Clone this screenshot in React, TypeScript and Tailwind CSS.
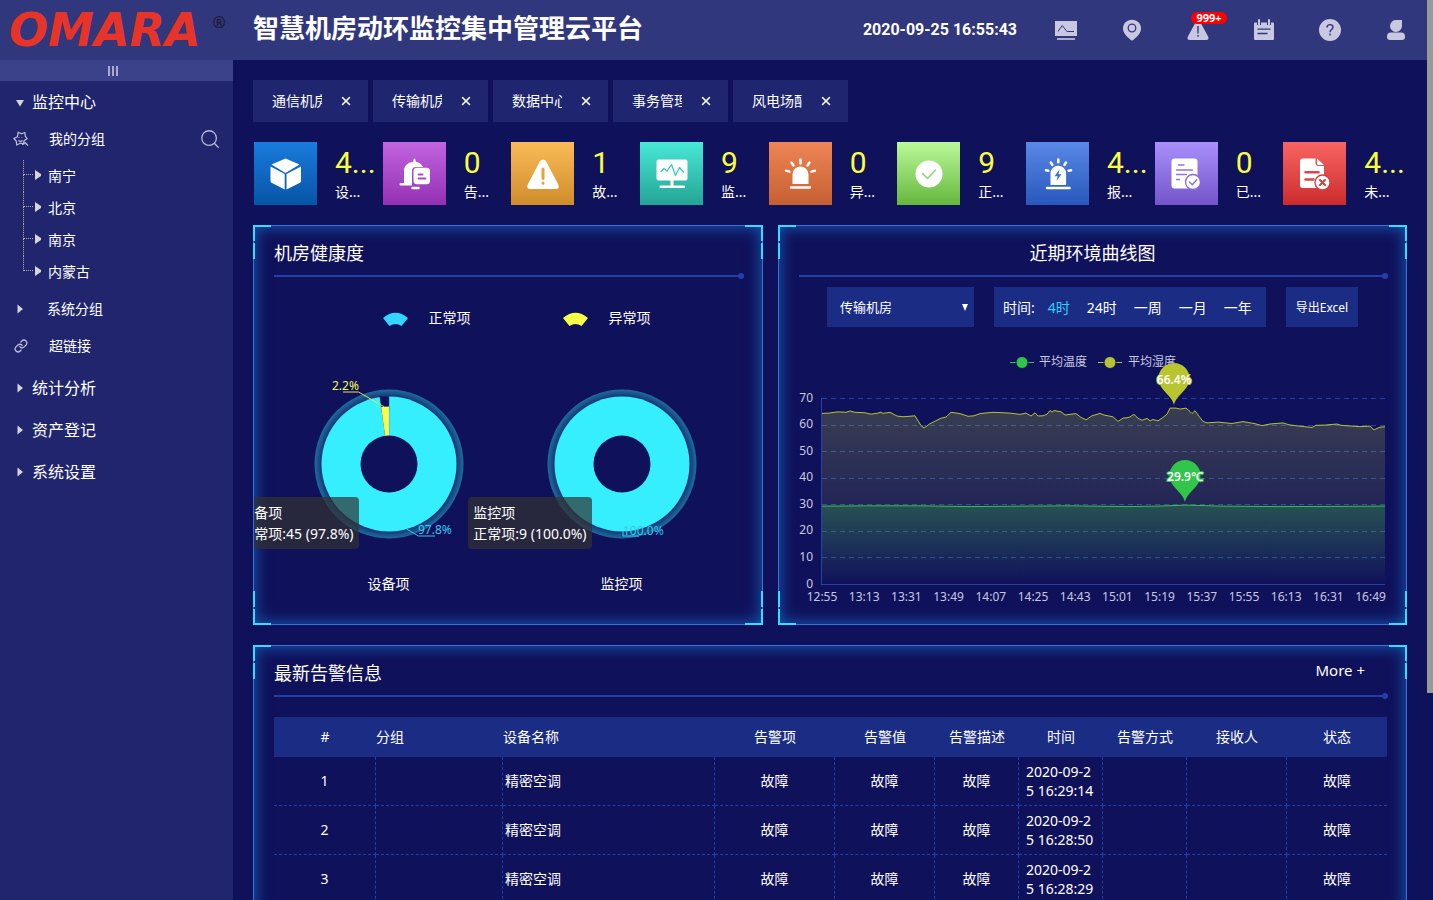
import type { ReactNode } from "react";
import { Link as LinkIcon, Search, X } from "lucide-react";

const tabs = ["通信机房", "传输机房", "数据中心", "事务管理", "风电场配"];

const groups = ["南宁", "北京", "南京", "内蒙古"];

const ranges = ["4时", "24时", "一周", "一月", "一年"];

const alarms = [
	{ id: 1, name: "精密空调", item: "故障", value: "故障", desc: "故障", time: "2020-09-25 16:29:14", state: "故障" },
	{ id: 2, name: "精密空调", item: "故障", value: "故障", desc: "故障", time: "2020-09-25 16:28:50", state: "故障" },
	{ id: 3, name: "精密空调", item: "故障", value: "故障", desc: "故障", time: "2020-09-25 16:28:29", state: "故障" },
];

// [x, value] pairs, x in chart units
const humidity = [
	[43, 64.4], [50, 64.5], [59, 65], [67, 64.8], [71, 65.3], [76, 64.8], [86, 64.6], [92, 64.1], [99, 64.5],
	[102, 64.9], [104, 64.4], [111, 64.8], [118, 63.4], [124, 63.1], [136, 63.5], [142, 59.8], [145, 58.9],
	[151, 60.5], [162, 62.6], [167, 63], [172, 64.8], [181, 64.3], [189, 63.3], [195, 63.5], [201, 64.3],
	[214, 64.8], [231, 64.5], [241, 64], [247, 64.5], [252, 63.4], [256, 64.6], [259, 63.4], [264, 63.5],
	[268, 64.1], [271, 65.5], [273, 64.9], [275, 65.5], [282, 65], [286, 63.8], [297, 64.3], [302, 62.9],
	[307, 62], [313, 63.5], [321, 64.4], [325, 63.8], [334, 63.1], [339, 61.4], [344, 62.6], [350, 62.9],
	[355, 64], [359, 62.6], [363, 61.8], [368, 62.5], [371, 61.6], [374, 62.1], [379, 61.6], [383, 62.6],
	[388, 64.1], [391, 66.4], [397, 66.4], [401, 66], [407, 66.4], [411, 65.1], [413, 64.3], [416, 65.4],
	[420, 63.3], [424, 61.4], [428, 60.8], [439, 61.1], [453, 60.6], [464, 61.3], [476, 60.5], [483, 59.8],
	[491, 60.4], [504, 60.8], [510, 60.1], [520, 59.6], [533, 59.1], [537, 59.9], [546, 60], [558, 60.4],
	[562, 59.9], [573, 59.6], [581, 59.4], [591, 59.6], [595, 58.2], [600, 59.1], [606, 59.4],
];

const temperature = [
	[43, 29.5], [100, 29.6], [140, 29.6], [190, 29.3], [290, 29.6], [350, 29.3], [380, 29.5], [407, 29.9],
	[440, 29.5], [500, 29.3], [560, 29.4], [606, 29.5],
];

const hours = [
	"12:55", "13:13", "13:31", "13:49", "14:07", "14:25", "14:43",
	"15:01", "15:19", "15:37", "15:55", "16:13", "16:31", "16:49",
];

const yOf = (v: number) => 243.5 - (v * 186) / 70;

const toPoints = (data: number[][]) => data.map(([x, v]) => `${x},${yOf(v).toFixed(1)}`).join(" ");

function Caret({ open }: { open?: boolean }) {
	return (
		<svg viewBox="0 0 10 10" className="size-[10px] fill-[#d5d5d5]" aria-hidden="true">
			<path d={open ? "M1 3h8L5 9.5z" : "M2.5 .5v9l5.5-4.5z"} />
		</svg>
	);
}

function HeaderIcons() {
	return (
		<nav className="flex items-center gap-11 text-[#c8c9e0]">
			<button aria-label="监控">
				<svg viewBox="0 0 22 22" className="size-[22px]" fill="none" stroke="currentColor">
					<path d="M0 2h22v15H0z" fill="currentColor" stroke="none" />
					<path d="M3 12.500l4.200-6 4.800 6h7" stroke="#31377c" />
					<path d="M2 20h18" strokeWidth="1.600" />
				</svg>
			</button>
			<button aria-label="地图">
				<svg viewBox="0 0 22 22" className="size-[22px]">
					<path d="M11 .7c5.200 0 9 3.800 9 8.800 0 4.800-4.300 9-9 12.200C6.300 18.500 2 14.300 2 9.500 2 4.500 5.800.7 11 .7z" fill="currentColor" />
					<circle cx="11" cy="9" r="3.800" fill="none" stroke="#31377c" strokeWidth="1.300" />
				</svg>
			</button>
			<button aria-label="告警" className="relative">
				<svg viewBox="0 0 22 22" className="size-[22px]">
					<path d="M11 1.500c1 0 1.700.5 2.200 1.400l7.900 14.600c1 1.900.2 3.500-1.900 3.500H2.800C.7 21-.1 19.400.9 17.500L8.800 2.900C9.300 2 10 1.500 11 1.500z" fill="currentColor" />
					<path d="M11 7v7.500M11 16v1.800" stroke="#31377c" strokeWidth="1.400" />
				</svg>
				<span className="absolute left-1 -top-[7px] h-3 w-9 rounded-md bg-[#fe0000] text-center text-[11px] leading-3 font-bold text-white">
					999+
				</span>
			</button>
			<button aria-label="日志">
				<svg viewBox="0 0 22 22" className="size-[22px]">
					<path d="M2 3.500h18q1 0 1 1V20q0 1-1 1H2q-1 0-1-1V4.500q0-1 1-1z" fill="currentColor" />
					<path d="M6 1v5M16 1v5" stroke="#31377c" strokeWidth="4" />
					<path d="M6 1v4.500M16 1v4.500" stroke="currentColor" strokeWidth="2" strokeLinecap="round" />
					<path d="M4.500 10.200h13M4.500 14.500h10" stroke="#31377c" strokeWidth="1.300" />
				</svg>
			</button>
			<button aria-label="帮助">
				<svg viewBox="0 0 22 22" className="size-[22px]">
					<circle cx="11" cy="11" r="11" fill="currentColor" />
					<path d="M8 8.600c0-1.900 1.300-3 3-3s3 1.100 3 2.700c0 2.200-3 2.400-3 4.900M11 14.600v1.900" fill="none" stroke="#31377c" strokeWidth="1.400" />
				</svg>
			</button>
			<button aria-label="用户">
				<svg viewBox="0 0 22 22" className="size-[22px]" fill="currentColor">
					<path d="M11.500 1H17v6a6 6 0 1 1-5.500-6z" />
					<path d="M6 13.500h10q4 0 4 4v.5q0 3-3 3H5q-3 0-3-3v-.5q0-4 4-4z" />
				</svg>
			</button>
		</nav>
	);
}

function Header() {
	return (
		<header className="flex h-[60px] shrink-0 items-center bg-[#31377c] pr-5">
			<div className="flex w-[253px] shrink-0 items-start pl-[9px]">
				<span className="font-['DejaVu_Sans',sans-serif] text-[46px] leading-[56px] font-bold italic text-[#e73429]">OMARA</span>
				<span className="ml-3 mt-2 text-base leading-6 font-bold text-[#1c1a3a]">®</span>
			</div>
			<h1 className="pb-1 text-[26px] leading-9 font-bold whitespace-nowrap">智慧机房动环监控集中管理云平台</h1>
			<time className="mr-[38px] ml-auto font-['Roboto',sans-serif] text-base font-bold whitespace-nowrap">2020-09-25 16:55:43</time>
			<HeaderIcons />
		</header>
	);
}

function MenuRow({ label, open }: { label: string; open?: boolean }) {
	return (
		<button className="flex h-[42px] w-full items-center gap-[7px] pl-[15px] text-base">
			<Caret open={open} />
			{label}
		</button>
	);
}

function Sidebar() {
	return (
		<aside className="flex w-[233px] shrink-0 flex-col bg-[#20256e]">
			<button aria-label="收起菜单" className="flex h-[21px] items-center justify-center gap-0.5 bg-[#3b428a] pr-2">
				<span className="h-[10px] w-0.5 bg-[#a9acd0]" />
				<span className="h-[10px] w-0.5 bg-[#a9acd0]" />
				<span className="h-[10px] w-0.5 bg-[#a9acd0]" />
			</button>
			<MenuRow label="监控中心" open />
			<div className="flex h-[33px] items-center pr-3 pb-0.5 pl-[13px] text-sm">
				<svg viewBox="0 0 16 16" className="size-4" fill="none" stroke="#c0c1d6" strokeWidth="1.200" strokeLinejoin="round">
					<path d="M5.200 1.200l3.300 1.600L12 1.500l.2 3.600 2 2.700-3 1.700-1 3.300-2.700-.8L3.700 14l-.5-4L.8 7.500l3.600-1.700z" />
					<path d="M5.500 9.500c1.200 1.300 3 1.200 4-.2M6 6.300v.6M9 6v.6M11.500 11l3.500 3.500M9 13.500l3-1" />
				</svg>
				<span className="flex-1 pl-5">我的分组</span>
				<button aria-label="搜索">
					<Search size={22} strokeWidth={1.400} color="#b9bbd4" />
				</button>
			</div>
			<ul className="pt-1 pl-[23px] text-sm">
				{groups.map((g, i) => (
					<li key={g} className="flex h-8 items-center">
						<span className="flex h-full w-[10px] flex-col">
							<span className="h-[15px] border-b border-l border-dotted border-[#b5b59a]" />
							{i < groups.length - 1 && <span className="flex-1 border-l border-dotted border-[#b5b59a]" />}
						</span>
						<button className="flex items-center gap-1">
							<svg viewBox="0 0 11 14" className="mb-[3px] h-[14px] w-[11px] fill-[#d5d5d5]" aria-hidden="true">
								<path d="M2 2l6 4v2l-6 4z" />
							</svg>
							{g}
						</button>
					</li>
				))}
			</ul>
			<button className="flex h-[42px] items-center gap-[22px] pl-[15px] text-sm">
				<Caret />
				系统分组
			</button>
			<a href="#" className="mb-[5px] flex h-8 items-center gap-[21px] pl-[14px] text-sm">
				<LinkIcon size={14} strokeWidth={2.200} color="#c0c1d6" />
				超链接
			</a>
			<MenuRow label="统计分析" />
			<MenuRow label="资产登记" />
			<MenuRow label="系统设置" />
		</aside>
	);
}

function StatIcon({ children }: { children: ReactNode }) {
	return (
		<svg viewBox="0 0 32 32" className="size-8" fill="#fff" stroke="none" strokeLinecap="round" strokeLinejoin="round">
			{children}
		</svg>
	);
}

const stats = [
	{
		value: "4...", label: "设...", tile: "bg-linear-to-b from-[#1a7bdd] to-[#0655a5]",
		icon: <path d="M15.500.500L29.500 6.500 15.500 15 1.500 6.500zM.500 8.500L14.700 16v15.500L1.500 24.800q-1-.5-1-1.800zM31 8.500L16.500 16v15.500l13.500-6.700q1-.5 1-1.800z" />,
	},
	{
		value: "0", label: "告...", tile: "bg-linear-to-b from-[#c263e0] to-[#9430b3]",
		icon: (
			<>
				<path d="M16.500.500q1 0 1 1.500l.3 1.700c3.500.7 6 2.500 7.200 5.300h-7q-4 0-4 4v14.500H2.500q-1 0-1-1.200t1-1.200H6V13c0-5 3.500-8.500 9.200-9.300L15.500 2q0-1.500 1-1.500z" />
				<rect x="15.500" y="9.800" width="16.500" height="16.500" rx="3.500" />
				<path d="M20.500 16.500h4M20.500 20.500h7" stroke="#ab48c8" strokeWidth="1.800" />
				<path d="M14.500 30h6" stroke="#fff" strokeWidth="2.500" />
			</>
		),
	},
	{
		value: "1", label: "故...", tile: "bg-linear-to-b from-[#fabb56] to-[#cf8d2a]",
		icon: (
			<>
				<path d="M16 1.500q2 0 3.200 2L31 26q2.300 4.800-2.500 5h-25Q-1.300 30.800 1 26L12.800 3.500q1.200-2 3.200-2z" />
				<path d="M16 11v9.500M16 25v.3" stroke="#e5a440" strokeWidth="3" />
			</>
		),
	},
	{
		value: "9", label: "监...", tile: "bg-linear-to-b from-[#48e8d6] to-[#24a495]",
		icon: (
			<>
				<path d="M2.500 1.500h27q2 0 2 2v17q0 2-2 2h-12v5H28q1 0 1 1.200T28 30H4.500q-1 0-1-1.200t1-1.300h10v-5h-12q-2 0-2-2v-17q0-2 2-2z" />
				<path d="M5 13.500l3-3 3 2.500 4.500-6.500 4 11 4-8 4 4.500" fill="none" stroke="#38c9b8" strokeWidth="1.300" />
			</>
		),
	},
	{
		value: "0", label: "异...", tile: "bg-linear-to-b from-[#ef8556] to-[#c55f31]",
		icon: (
			<>
				<path d="M8.500 26V16.500a8 8 0 0 1 16 0V26z" />
				<path d="M7 29.500h19M16.500 1.500v4M7.500 4.500l2 3M25.500 4.500l-2 3M2 12.700l3.500 1M31 12.700l-3.500 1" fill="none" stroke="#fff" strokeWidth="2.400" />
			</>
		),
	},
	{
		value: "9", label: "正...", tile: "bg-linear-to-b from-[#bcf999] to-[#64b73b]",
		icon: (
			<>
				<circle cx="16" cy="16" r="13.500" />
				<path d="M9.500 15.500l5 5 8-8.500" fill="none" stroke="#8ed567" strokeWidth="1.500" />
			</>
		),
	},
	{
		value: "4...", label: "报...", tile: "bg-linear-to-b from-[#5988e6] to-[#2858bb]",
		icon: (
			<>
				<path d="M8.500 27V15.500a7.800 7.800 0 0 1 15.600 0V27z" />
				<path d="M5 30h22.500M16.300 1.500v2.800M8.800 4.500l1.500 2.300M24 4.500l-1.500 2.300M4 12.300l2.300.5M29 12.300l-2.300.5" fill="none" stroke="#fff" strokeWidth="2.600" />
				<path d="M17.500 11.500l-5 6.800h3.200l-1.200 4.700 5-6.800h-3z" fill="#3d6fd2" />
			</>
		),
	},
	{
		value: "0", label: "已...", tile: "bg-linear-to-b from-[#a98ffb] to-[#7355c9]",
		icon: (
			<>
				<path d="M4.500.500h20q3 0 3 3v24q0 3-3 3h-20q-3 0-3-3v-24q0-3 3-3z" />
				<path d="M8.500 7h5.500M6.500 12h16M6.500 16.500h10M6.500 21.500h3" stroke="#9273e3" strokeWidth="1.300" />
				<circle cx="23" cy="24" r="7.500" stroke="#8869da" strokeWidth="1.300" />
				<path d="M19.500 24l2.800 2.800 4.500-5" fill="none" stroke="#8869da" strokeWidth="1.300" />
			</>
		),
	},
	{
		value: "4...", label: "未...", tile: "bg-linear-to-b from-[#f86463] to-[#cb2a2d]",
		icon: (
			<>
				<path d="M4 .500h12.500V5q0 3 3 3h5.500v19q0 3-3 3H4q-3 0-3-3V3.500q0-3 3-3zM18 .500L25 7h-5.500q-1.500 0-1.500-1.500z" />
				<path d="M6.500 14.300h13M6.500 21.500h8" stroke="#e04446" strokeWidth="2.600" />
				<circle cx="23.500" cy="24.500" r="7.500" stroke="#d83b3d" strokeWidth="1.300" />
				<path d="M21 22l5 5M26 22l-5 5" fill="none" stroke="#d83b3d" strokeWidth="2" />
			</>
		),
	},
];

function Corners() {
	return (
		<div aria-hidden="true">
			<span className="absolute top-0 left-0 h-4 w-[18px] border-t-2 border-l-2 border-[#36dcfb]" />
			<span className="absolute top-[18px] left-0 h-4 w-0.5 bg-[#36dcfb]" />
			<span className="absolute top-0 right-0 h-4 w-[18px] border-t-2 border-r-2 border-[#36dcfb]" />
			<span className="absolute top-[18px] right-0 h-4 w-0.5 bg-[#36dcfb]" />
			<span className="absolute bottom-0 left-0 h-4 w-[18px] border-b-2 border-l-2 border-[#36dcfb]" />
			<span className="absolute bottom-[18px] left-0 h-4 w-0.5 bg-[#36dcfb]" />
			<span className="absolute right-0 bottom-0 h-4 w-[18px] border-r-2 border-b-2 border-[#36dcfb]" />
			<span className="absolute right-0 bottom-[18px] h-4 w-0.5 bg-[#36dcfb]" />
		</div>
	);
}

function Panel({ title, center, more, children }: { title: string; center?: boolean; more?: boolean; children: ReactNode }) {
	return (
		<section className="relative">
			<div className="h-full overflow-hidden border border-[#3a6fdc] shadow-[inset_0_0_16px_#1565bd]">
				<div className="mx-5 flex h-[49px] items-center">
					<h2 className={center ? "flex-1 pt-[5px] text-center text-lg" : "flex-1 pt-[5px] text-lg"}>{title}</h2>
					{more && <a href="#" className="mr-[21px] text-[15px]">More +</a>}
				</div>
				<div className="mr-[18px] ml-5 flex items-center">
					<span className="h-0.5 flex-1 bg-[#2340a8]" />
					<span className="-my-0.5 size-1.5 rounded-full bg-[#2340a8]" />
				</div>
				{children}
			</div>
			<Corners />
		</section>
	);
}

function Donut({ title, tip, split }: { title: string; tip: string; split?: boolean }) {
	return (
		<figure className="relative flex flex-col items-center">
			<svg viewBox="-85 -85 170 170" className="size-[170px] overflow-visible text-[12px]">
				<defs>
					<radialGradient id="halo" gradientUnits="userSpaceOnUse" cx="0" cy="0" r="75">
						<stop offset=".89" stopColor="#143274" />
						<stop offset="1" stopColor="#1f70a2" />
					</radialGradient>
				</defs>
				<circle r="74.500" fill="url(#halo)" />
				<circle r="67.500" fill="#35efff" />
				{split && (
					<>
						<path d="M0 0L-9.400-67.800H.2z" fill="#10115b" />
						<path d="M0 0L-7.900-57Q-4-57.500 0-57.500z" fill="#f9ff4a" />
					</>
				)}
				<circle r="28.500" fill="#10115b" />
				{split ? (
					<>
						<path d="M-46-72h15.500L-4.500-57" fill="none" stroke="#dfe84c" />
						<text x="-57" y="-74" fill="#f2fb4e">2.2%</text>
						<path d="M17.500 65l12 7H46" fill="none" stroke="#35c8f0" />
						<text x="29" y="70" fill="#35c8f0">97.8%</text>
					</>
				) : (
					<>
						<path d="M1 67v5h16" fill="none" stroke="#35c8f0" />
						<text x="1" y="71" fill="#35c8f0">100.0%</text>
					</>
				)}
			</svg>
			<figcaption className="mt-[25px] text-sm leading-5">{title}</figcaption>
			<div className="absolute top-[118px] right-[calc(50%+30px)] rounded bg-[#323232b3] p-[5px] text-sm leading-[21px] whitespace-nowrap">
				{title}
				<br />
				{tip}
			</div>
		</figure>
	);
}

function LegendFan({ className, label }: { className: string; label: string }) {
	return (
		<span className="flex items-center gap-[21px]">
			<svg viewBox="0 0 25 14" className={className}>
				<path d="M0 6Q12.500-4.500 25 6L18.500 14Q12.500 10 6.500 14z" />
			</svg>
			{label}
		</span>
	);
}

function Health() {
	return (
		<Panel title="机房健康度">
			<div className="flex h-[82px] items-center justify-center gap-[92px] pl-[17px] text-sm">
				<LegendFan className="mt-0.5 h-[14px] w-[25px] fill-[#33d6ff]" label="正常项" />
				<LegendFan className="mt-0.5 h-[14px] w-[25px] fill-[#f5ff45]" label="异常项" />
			</div>
			<div className="mt-5 grid grid-cols-2 pr-6 pb-[30px] pl-[18px]">
				<Donut title="设备项" tip="正常项:45 (97.8%)" split />
				<Donut title="监控项" tip="正常项:9 (100.0%)" />
			</div>
		</Panel>
	);
}

function Pin({ x, y, color, label }: { x: number; y: number; color: string; label: string }) {
	return (
		<g transform={`translate(${x} ${y})`}>
			<path d="M0 0C-2-10-15.500-15-15.500-26.500a15.500 15.500 0 0 1 31 0C15.500-15 2-10 0 0z" fill={color} />
			<text y="-21" textAnchor="middle" fill="#fff" stroke={color} strokeWidth="2" paintOrder="stroke" fontWeight="600">{label}</text>
		</g>
	);
}

function LineChart() {
	return (
		<svg viewBox="0 0 627 270" className="w-full text-[12px]" fill="#c8c9e0">
			<defs>
				<linearGradient id="areaHum" x1="0" y1="0" x2="0" y2="1">
					<stop offset="0" stopColor="#b5c334" stopOpacity=".25" />
					<stop offset="1" stopColor="#b5c334" stopOpacity="0" />
				</linearGradient>
				<linearGradient id="areaTemp" x1="0" y1="0" x2="0" y2="1">
					<stop offset="0" stopColor="#31c54a" stopOpacity=".27" />
					<stop offset="1" stopColor="#31c54a" stopOpacity="0" />
				</linearGradient>
			</defs>
			<path d="M231 21.500h24" stroke="#31c54a" />
			<circle cx="243" cy="21.500" r="6" fill="#31c54a" stroke="#10115b" />
			<text x="260" y="25">平均温度</text>
			<path d="M319 21.500h24" stroke="#b5c334" />
			<circle cx="331" cy="21.500" r="6" fill="#b5c334" stroke="#10115b" />
			<text x="349" y="25">平均湿度</text>
			{[0, 10, 20, 30, 40, 50, 60, 70].map((v) => (
				<g key={v}>
					<text x="34" y={yOf(v) + 3} textAnchor="end">{v}</text>
					<path
						d={`M43 ${Math.floor(yOf(v)) + 0.5}H606`}
						stroke="#2442a8"
						strokeDasharray={v === 0 ? undefined : "5 4"}
					/>
				</g>
			))}
			<path d="M42.500 57v187" stroke="#2442a8" />
			<polygon points={`43,243 ${toPoints(humidity)} 606,243`} fill="url(#areaHum)" />
			<polygon points={`43,243 ${toPoints(temperature)} 606,243`} fill="url(#areaTemp)" />
			<polyline points={toPoints(humidity)} fill="none" stroke="#b5c334" />
			<polyline points={toPoints(temperature)} fill="none" stroke="#31c54a" />
			{hours.map((h, i) => (
				<text key={h} x={43 + i * 42.2} y="260" textAnchor="middle">{h}</text>
			))}
			<Pin x={395} y={64} color="#b9c52f" label="66.4%" />
			<Pin x={406} y={161} color="#31c54a" label="29.9℃" />
		</svg>
	);
}

function Environment() {
	return (
		<Panel title="近期环境曲线图" center>
			<div className="mt-[10px] mb-[14px] flex justify-center gap-5">
				<label className="relative flex h-10 w-[147px] items-center bg-[#1b2c85] text-[13px]">
					<select aria-label="机房" className="h-full w-full appearance-none bg-transparent pt-0.5 pl-[13px]">
						<option>传输机房</option>
					</select>
					<svg viewBox="0 0 6 7" className="pointer-events-none absolute right-[6px] h-[7px] w-[6px] fill-white">
						<path d="M0 0h6L3 7z" />
					</svg>
				</label>
				<div className="flex h-10 w-[272px] items-center gap-[17px] bg-[#1b2c85] pt-0.5 pl-[9px] text-sm whitespace-nowrap">
					<span className="-mr-1">时间:</span>
					{ranges.map((r, i) => (
						<button key={r} className={i === 0 ? "text-[#2fd0fa]" : ""}>{r}</button>
					))}
				</div>
				<button className="h-10 w-[72px] bg-[#1b2c85] pt-0.5 text-xs whitespace-nowrap">导出Excel</button>
			</div>
			<LineChart />
		</Panel>
	);
}

function Alarms() {
	const cell = "border-r border-b border-dashed border-[#2340a8]";
	return (
		<Panel title="最新告警信息" more>
			<div className="px-5 pt-5 pb-20">
				<table className="w-full table-fixed border-separate border-spacing-0 text-center text-sm">
					<colgroup>
						<col className="w-[102px]" />
						<col className="w-[127px]" />
						<col className="w-[212px]" />
						<col className="w-[120px]" />
						<col className="w-[100px]" />
						<col className="w-[84px]" />
						<col className="w-[84px]" />
						<col className="w-[84px]" />
						<col className="w-[100px]" />
						<col className="w-[100px]" />
					</colgroup>
					<thead className="bg-[#1b2c85]">
						<tr className="h-10 *:p-0 *:font-normal">
							<th>#</th>
							<th className="text-left">分组</th>
							<th className="text-left">设备名称</th>
							<th>告警项</th>
							<th>告警值</th>
							<th>告警描述</th>
							<th>时间</th>
							<th>告警方式</th>
							<th>接收人</th>
							<th>状态</th>
						</tr>
					</thead>
					<tbody>
						{alarms.map((a) => (
							<tr key={a.id} className="h-[49px]">
								<td className={cell}>{a.id}</td>
								<td className={cell} />
								<td className={`${cell} pl-0.5 text-left`}>{a.name}</td>
								<td className={cell}>{a.item}</td>
								<td className={cell}>{a.value}</td>
								<td className={cell}>{a.desc}</td>
								<td className={`${cell} px-[7px] text-left leading-[19px] break-all`}>{a.time}</td>
								<td className={cell} />
								<td className={cell} />
								<td className="border-b border-dashed border-[#2340a8]">{a.state}</td>
							</tr>
						))}
					</tbody>
				</table>
			</div>
		</Panel>
	);
}

export default function App() {
	return (
		<div className="flex h-screen overflow-hidden bg-[#10115b] font-['Noto_Sans','Noto_Sans_CJK_SC',sans-serif] text-white">
			<div className="flex min-w-0 flex-1 flex-col">
				<Header />
				<div className="flex min-h-0 flex-1">
					<Sidebar />
					<main className="min-w-0 flex-1 overflow-hidden p-5">
						<div className="flex gap-[5px]">
							{tabs.map((t) => (
								<div key={t} className="flex h-[42px] w-[115px] items-center bg-[#1f266f] pl-[19px] text-sm">
									<span className="w-[50px] overflow-hidden whitespace-nowrap">{t}</span>
									<button aria-label="关闭" className="ml-[17px]">
										<X size={14} strokeWidth={2.600} />
									</button>
								</div>
							))}
						</div>
						<div className="mt-5 -mr-[5px] grid grid-cols-9 pl-px">
							{stats.map((s, i) => (
								<div key={i} className="flex gap-[18px]">
									<div className={`flex size-[63px] shrink-0 items-center justify-center ${s.tile}`}>
										<StatIcon>{s.icon}</StatIcon>
									</div>
									<div className="min-w-0 whitespace-nowrap">
										<p className="h-10 font-['Roboto',sans-serif] text-[30px] leading-[42px] text-[#f8ff3c]">{s.value}</p>
										<p className="text-sm leading-5">{s.label}</p>
									</div>
								</div>
							))}
						</div>
						<div className="mt-5 grid grid-cols-[510fr_629fr] gap-[15px]">
							<Health />
							<Environment />
						</div>
						<div className="mt-5">
							<Alarms />
						</div>
					</main>
				</div>
			</div>
			<div className="w-1.5 shrink-0">
				<div className="h-[77%] bg-[#999999]" />
			</div>
		</div>
	);
}
